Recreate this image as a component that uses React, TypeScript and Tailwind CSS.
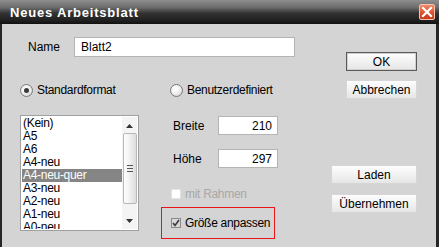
import React from "react";

const Radio = ({ checked }: { checked?: boolean }) => (
  <span className="w-[13px] h-[13px] rounded-full border border-[#7a7a7a] bg-[radial-gradient(circle_at_40%_35%,#ffffff_0%,#f0f0f0_45%,#c8c8c8_100%)] flex items-center justify-center shrink-0">
    {checked && <span className="w-[5px] h-[5px] rounded-full bg-[#3a3a3a]" />}
  </span>
);

const Btn = ({ label, w, def }: { label: string; w: string; def?: boolean }) => (
  <div
    className={`${w} h-[19px] flex items-center justify-center text-[12px] text-black bg-[linear-gradient(#fdfdfd,#f2f2f2_50%,#e6e6e6)] ${
      def ? "border border-[#5a5a5a] shadow-[inset_0_0_0_1px_#d0d0d0]" : "border border-[#d6d6d6]"
    }`}
  >
    {label}
  </div>
);

export default function App() {
  const items = ["(Kein)", "A5", "A6", "A4-neu", "A4-neu-quer", "A3-neu", "A2-neu", "A1-neu", "A0-neu"];
  return (
    <div className="w-[439px] h-[247px] overflow-hidden font-['Liberation_Sans',Arial,sans-serif] text-[11px] text-black">
      {/* Title bar */}
      <div className="h-[24px] flex items-center justify-between pl-[10px] pr-[4px] bg-[linear-gradient(#8e8e8e_0%,#6e6e6e_30%,#333333_55%,#202020_85%,#101010_100%)]">
        <span className="text-white font-bold text-[13px] tracking-[0.8px] leading-none mt-[1px]">Neues Arbeitsblatt</span>
        <span className="w-[16px] h-[16px] rounded-[2px] border border-[#f3c2b0] bg-[linear-gradient(#f08a68,#dd5230_55%,#c53b1c)] flex items-center justify-center">
          <svg width="12" height="12" viewBox="0 0 12 12">
            <path d="M2 2 L10 10 M10 2 L2 10" stroke="white" strokeWidth="2.2" strokeLinecap="square" />
          </svg>
        </span>
      </div>

      {/* Body */}
      <div className="h-[223px] flex bg-[#d4d4d4] border-l-2 border-r-[3px] border-[#262626]">
        {/* Left part */}
        <div className="w-[329px] pl-[18px] flex flex-col">
          {/* Name row */}
          <div className="mt-[13px] flex items-center h-[20px]">
            <span className="w-[54px] pl-[8px] text-[12px]">Name</span>
            <div className="w-[221px] h-[20px] bg-white border border-[#b4b4b4] flex items-center pl-[6px] text-[12px]">Blatt2</div>
          </div>

          {/* Radio row */}
          <div className="mt-[26px] flex items-center h-[14px]">
            <div className="w-[150px] flex items-center gap-[4px]">
              <Radio checked />
              <span className="tracking-[-0.3px] text-[12px]">Standardformat</span>
            </div>
            <div className="flex items-center gap-[4px]">
              <Radio />
              <span className="tracking-[-0.3px] text-[12px]">Benutzerdefiniert</span>
            </div>
          </div>

          {/* Main row */}
          <div className="mt-[18px] flex">
            {/* List box */}
            <div className="w-[119px] h-[116px] bg-white border border-[#a0a0a0] flex p-[1px] pr-[1px]">
              <div className="w-[100px] flex flex-col overflow-hidden">
                {items.map((it) => (
                  <div
                    key={it}
                    className={`h-[13px] leading-[13px] shrink-0 pl-[1px] text-[12px] tracking-[-0.3px] ${
                      it === "A4-neu-quer" ? "bg-[#858585] text-white" : ""
                    }`}
                  >
                    {it}
                  </div>
                ))}
              </div>
              <div className="w-[15px] flex flex-col items-center bg-[#f4f4f4]">
                <svg width="7" height="4" viewBox="0 0 7 4" className="mt-[7px]">
                  <path d="M0 4 L3.5 0 L7 4 Z" fill="#333" />
                </svg>
                <div className="mt-[5px] w-[14px] h-[71px] rounded-[2px] border border-[#b8b8b8] bg-[linear-gradient(90deg,#ffffff,#ececec_60%,#dcdcdc)] flex flex-col items-center justify-center gap-[2px]">
                  <span className="w-[6px] h-[1px] bg-[#555]" />
                  <span className="w-[6px] h-[1px] bg-[#555]" />
                  <span className="w-[6px] h-[1px] bg-[#555]" />
                </div>
                <svg width="7" height="4" viewBox="0 0 7 4" className="mt-[15px]">
                  <path d="M0 0 L3.5 4 L7 0 Z" fill="#333" />
                </svg>
              </div>
            </div>

            {/* Right part */}
            <div className="flex flex-col">
              <div className="mt-[1px] flex items-center h-[19px]">
                <span className="ml-[34px] w-[45px] text-[12px]">Breite</span>
                <div className="w-[60px] h-[19px] bg-white border border-[#b4b4b4] flex items-center justify-end pr-[5px] text-[12px]">210</div>
              </div>
              <div className="mt-[14px] flex items-center h-[19px]">
                <span className="ml-[34px] w-[45px] text-[12px]">Höhe</span>
                <div className="w-[60px] h-[19px] bg-white border border-[#b4b4b4] flex items-center justify-end pr-[5px] text-[12px]">297</div>
              </div>
              <div className="mt-[20px] flex items-center h-[11px] ml-[32px] gap-[4px]">
                <span className="w-[10px] h-[10px] bg-white border border-[#e2e2e2]" />
                <span className="text-[#a8a8a8] text-[12px] tracking-[-0.3px]">mit Rahmen</span>
              </div>
              <div className="mt-[8px] ml-[22px] w-[114px] h-[32px] border border-[#e8141a] flex items-center pl-[9px] gap-[4px]">
                <span className="w-[10px] h-[10px] bg-[#d8d8d8] border border-[#8a8a8a] flex items-center justify-center">
                  <svg width="8" height="8" viewBox="0 0 8 8">
                    <path d="M1 4 L3 6.5 L7 1" stroke="#3a3a3a" strokeWidth="1.6" fill="none" />
                  </svg>
                </span>
                <span className="text-[12px] tracking-[-0.3px]">Größe anpassen</span>
              </div>
            </div>
          </div>

          <div className="mt-[8px] ml-[12px] text-[#8a8a8a] text-[12px] leading-[13px]">Attribute</div>
        </div>

        {/* Right column buttons */}
        <div className="flex-1 flex flex-col items-end pr-[19px]">
          <div className="mt-[28px]"><Btn label="OK" w="w-[71px]" def /></div>
          <div className="mt-[9px]"><Btn label="Abbrechen" w="w-[71px]" /></div>
          <div className="mt-[66px]"><Btn label="Laden" w="w-[86px]" /></div>
          <div className="mt-[10px]"><Btn label="Übernehmen" w="w-[86px]" /></div>
        </div>
      </div>
    </div>
  );
}
